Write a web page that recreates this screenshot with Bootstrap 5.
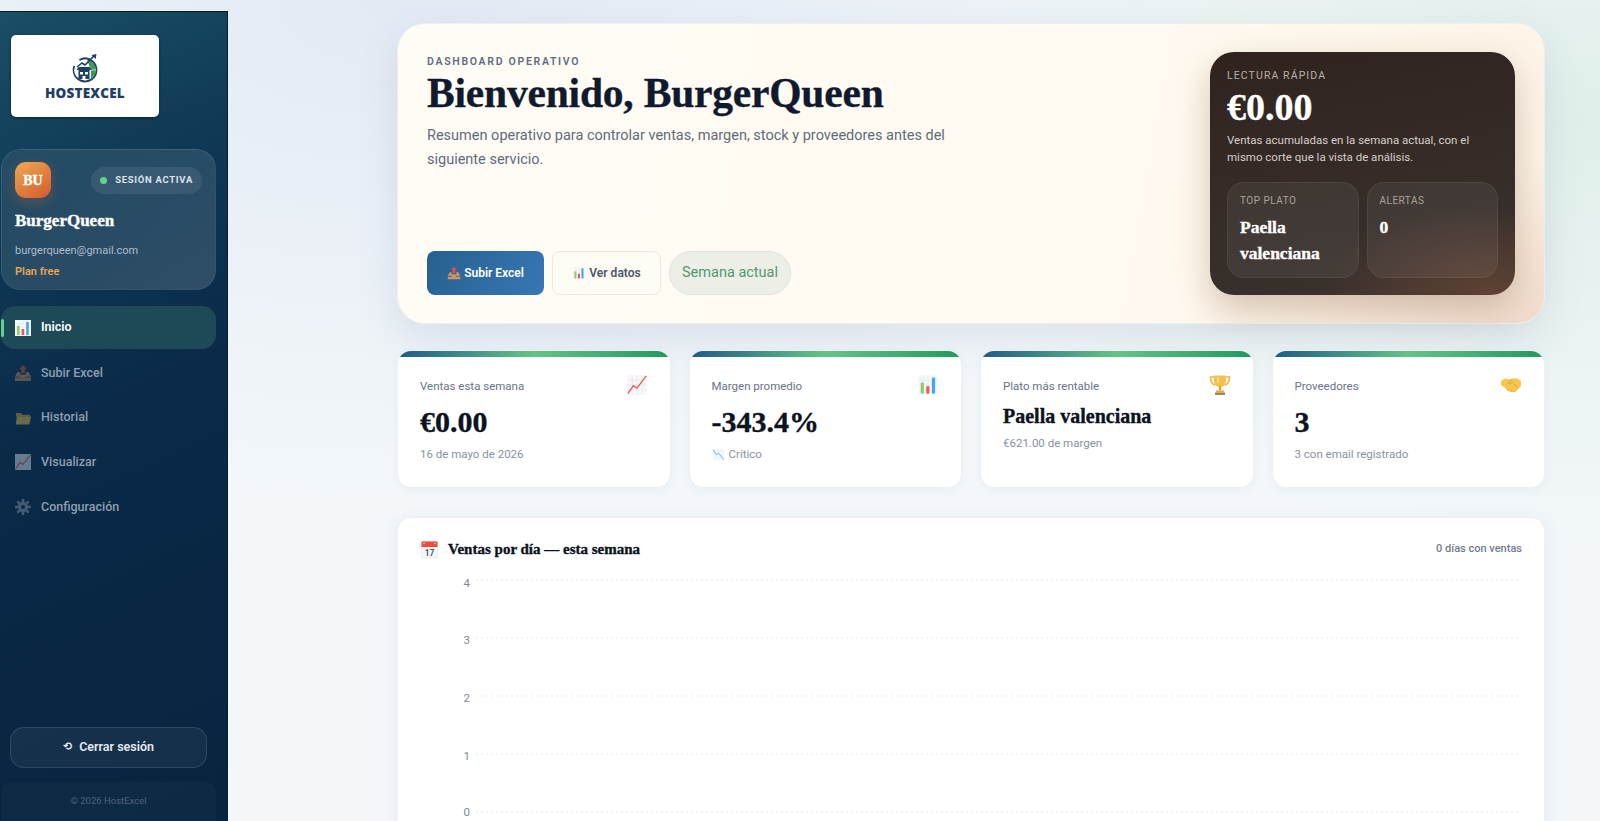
<!DOCTYPE html>
<html lang="es">
<head>
    <meta charset="utf-8" />
    <meta name="viewport" content="width=device-width, initial-scale=1">
    <title>HostExcel - Dashboard</title>
    <link href="https://cdn.jsdelivr.net/npm/bootstrap@5.3.0/dist/css/bootstrap.min.css" rel="stylesheet">
    <style>
        html, body { height: 821px; overflow: hidden; }
        body {
            font-family: Roboto, "Liberation Sans", sans-serif;
            background:
                radial-gradient(700px 420px at 100% 15%, #e0efea 0, rgba(224,239,234,0) 100%),
                radial-gradient(900px 500px at 25% 0, #e3eaf4 0, rgba(227,234,244,0) 100%),
                #f3f7fa;
            color: #0f172a;
        }
        .serif { font-family: "Liberation Serif", serif; font-weight: 700; -webkit-text-stroke: .35px currentColor; }
        .shell { height: 821px; }

        /* sidebar */
        .side {
            width: 228px; height: 810px; margin-top: 11px; flex: none;
            border-top: 1px solid #0b1c2c; border-right: 1px solid #0b1c2c;
            padding: 23px 11px 0 1px;
            background: linear-gradient(155deg, #1a4f66 0, #103a56 22%, #0a2a48 48%, #08243f 100%);
        }
        .logo-box { width: 148px; height: 82px; margin-left: 10px; border-radius: 5px; background: #fff; box-shadow: 0 1px 3px rgba(0,0,0,.5); }
        .logo-box svg { width: 27px; height: 30px; }
        .logo-word { font-family: "Open Sans", sans-serif; font-weight: 800; font-size: 13.5px; line-height: 13px; color: #1d3f63; letter-spacing: .2px; }
        .profile {
            margin-top: 32px; height: 141px; padding: 12px 13px;
            border: 1px solid rgba(255,255,255,.08); border-radius: 20px;
            background: linear-gradient(150deg, rgba(255,255,255,.07), rgba(255,255,255,.15));
        }
        .avatar { width: 36px; height: 36px; border-radius: 11px; font-size: 14px; color: #fff; background: linear-gradient(145deg, #eeaa50, #d4592f); box-shadow: 0 4px 14px rgba(212,110,50,.3); }
        .session { height: 27px; padding: 0 9px; border-radius: 14px; background: rgba(255,255,255,.08); font-size: 9.5px; font-weight: 700; letter-spacing: .7px; color: #dbe4ec; }
        .dot { width: 7px; height: 7px; border-radius: 50%; background: #5fd38d; }
        .pname { font-size: 17px; line-height: 20px; color: #fff; margin-top: 13px; }
        .pmail { font-size: 11px; color: #aebccb; margin-top: 13px; line-height: 14px; }
        .pplan { font-size: 11px; font-weight: 600; color: #e6a850; margin-top: 7px; line-height: 14px; }
        .side-nav { margin-top: 16px; }
        .side-nav .nav-link {
            height: 44.7px; padding: 0 0 0 13px; gap: 9px; border-radius: 14px;
            font-size: 12.5px; font-weight: 500; color: #8e9fb0; position: relative;
        }
        .side-nav .nav-link svg { width: 18px; height: 18px; opacity: .4; flex: none; }
        .side-nav .nav-link.active { height: 43px; margin-bottom: 1.7px; background: #1d4a56; color: #fff; font-weight: 600; }
        .side-nav .nav-link.active svg { opacity: 1; }
        .side-nav .nav-link.active::before { content: ""; position: absolute; left: 0; top: 13px; width: 3px; height: 18px; border-radius: 2px; background: #5fd38d; }
        .logout {
            margin-left: 9px; width: 197px; height: 41px; border-radius: 14px;
            border: 1px solid rgba(255,255,255,.12); background: rgba(255,255,255,.05);
            color: #e4eaf0; font-size: 12.5px; font-weight: 600; gap: 7px;
        }
        .logout:hover { color: #fff; border-color: rgba(255,255,255,.2); }
        .logout-g { font-family: "DejaVu Sans", sans-serif; font-size: 11px; }
        .side-foot { margin-top: 14px; height: 39px; border-radius: 10px 10px 0 0; background: rgba(255,255,255,.025); font-size: 9.5px; color: #4f6478; }

        /* main */
        .main-col { padding: 23px 55px 0 169px; min-width: 0; }
        .hero {
            height: 301px; padding: 28px 29px 28px 29px;
            border-radius: 28px; border: 1px solid #eef0ef;
            background:
                radial-gradient(360px 170px at 100% 100%, #f2dccd 0, rgba(242,220,205,0) 100%),
                linear-gradient(100deg, #fffcf5 0, #fffaf1 60%, #fdf4e7 100%);
            box-shadow: 0 14px 40px rgba(70,95,130,.13);
        }
        .eyebrow { font-size: 10.5px; font-weight: 600; letter-spacing: 1.7px; color: #5d6b80; line-height: 13px; margin-top: 3px; }
        .hero h1 { font-size: 41.5px; line-height: 46px; margin: 2px 0 0; color: #0f1a2e; letter-spacing: -.2px; }
        .hero-sub { width: 520px; font-size: 14.5px; line-height: 23.5px; color: #5e6b7d; margin-top: 8px; }
        .btn-up, .btn-see { height: 44px; padding: 0 19px; border-radius: 8px; font-size: 12px; font-weight: 600; gap: 3px; }
        .btn-up { width: 117px; padding: 0; color: #fff; border: 0; background: linear-gradient(120deg, #26608f, #3777b5); }
        .btn-up:hover { color: #fff; }
        .btn-see { width: 109px; padding: 0; color: #4b5666; border: 1px solid #efe9dc; background: #fffcf6; }
        .btn-up svg, .btn-see svg { width: 14px; height: 14px; }
        .range-pill { width: 122px; height: 44px; border-radius: 22px; background: #edeee6; border: 1px solid #dfe2d8; color: #4d9a70; font-size: 14.5px; }
        .quick {
            width: 305px; height: 243px; padding: 17px 17px 17px; border-radius: 24px; color: #fff;
            background:
                radial-gradient(170px 90px at 92% 100%, #5f4234 0, rgba(95,66,52,0) 100%),
                linear-gradient(170deg, #30231e 0, #362d29 60%, #3a322e 100%);
            box-shadow: 0 14px 36px rgba(120,80,50,.3);
        }
        .quick-lab { font-size: 10.5px; letter-spacing: 1.1px; color: #b9b0aa; line-height: 14px; }
        .quick-num { font-size: 38px; line-height: 40px; margin-top: 4px; }
        .quick-txt { font-size: 11.5px; line-height: 17px; color: #d5cfca; margin-top: 5px; }
        .tile { flex: 1 1 0; height: 96px; padding: 11px 12px; border-radius: 17px; border: 1px solid rgba(255,255,255,.06); background: rgba(255,255,255,.06); }
        .tile-lab { font-size: 10px; letter-spacing: .5px; color: #aaa29c; line-height: 14px; }
        .tile-val { font-size: 17.5px; line-height: 26px; margin-top: 6px; }

        .stat-row { --bs-gutter-x: 18px; --bs-gutter-y: 0; margin-top: 26px; }
        .stat {
            height: 138px; padding: 6px 22px 0; border: 1px solid #edf1f5; border-radius: 14px; position: relative; overflow: hidden;
            box-shadow: 0 2px 8px rgba(60,80,110,.05);
        }
        .stat::before { content: ""; position: absolute; left: 0; right: 0; top: 0; height: 6px; background: linear-gradient(90deg, #1f5a8a 0, #63c484 50%, #1f9a5f 100%); }
        .stat-lab { font-size: 11.5px; color: #67748a; margin-top: 22px; line-height: 14px; }
        .stat-ico { width: 22px; height: 22px; margin-top: 17px; }
        .stat-num { font-size: 30px; line-height: 36px; margin-top: 8px; color: #0b1220; }
        .stat-name { font-size: 20px; line-height: 26px; margin-top: 7px; color: #0b1220; }
        .stat-sub { font-size: 11.5px; color: #8792a4; margin-top: 6px; line-height: 16px; gap: 4px; }
        .stat-sub svg { width: 13px; height: 13px; }

        .chart-card { margin-top: 29px; height: 340px; padding: 20px 22px 0 22px; border: 1px solid #edf1f5; border-radius: 14px; box-shadow: 0 4px 18px rgba(60,80,110,.08); }
        .chart-title { font-size: 15px; gap: 9px; color: #0b1220; line-height: 22px; }
        .chart-title svg { width: 19px; height: 19px; }
        .chart-meta { font-size: 11px; font-weight: 500; color: #707c8e; }
        .chart-svg { display: block; margin-top: 10px; }
        .chart-svg text { font-family: Roboto, "Liberation Sans", sans-serif; font-size: 11.5px; fill: #7e899c; }
        .chart-svg line { stroke: #e6e9ee; stroke-dasharray: 2 3; }
    </style>
</head>
<body>
    <svg class="d-none" xmlns="http://www.w3.org/2000/svg">
        <symbol id="e-bars" viewBox="0 0 18 18">
            <rect x="1" y="1" width="16" height="16" fill="#f6f8fa"/>
            <path d="M1 5h16M1 9h16M1 13h16M5 1v16M9 1v16M13 1v16" stroke="#dfe6ee" stroke-width=".5"/>
            <rect x="3" y="7" width="2.6" height="9" fill="#8fce6b"/>
            <rect x="7.6" y="10" width="2.6" height="6" fill="#ef5a4c"/>
            <rect x="12.2" y="3" width="2.6" height="13" fill="#42a5f5"/>
        </symbol>
        <symbol id="e-out" viewBox="0 0 18 18">
            <path d="M9 1l4 4.2h-2.2V9H7.2V5.2H5z" fill="#e5503f"/>
            <path d="M3.5 8h2.6v2.5h5.8V8h2.6L17 12.5V17H1v-4.5z" fill="#c9956a"/>
            <path d="M1 12.5h5l1 1.8h4l1-1.8h5V14H1z" fill="#8d6344"/>
        </symbol>
        <symbol id="e-folder" viewBox="0 0 18 18">
            <path d="M2 4h5l1.5 1.8H16v2H2z" fill="#e0a93a"/>
            <path d="M3 7.4h14l-1.6 8H1.6z" fill="#f5c84c"/>
        </symbol>
        <symbol id="e-up" viewBox="0 0 18 18">
            <rect x="1" y="1" width="16" height="16" fill="#f6f8fa"/>
            <path d="M1 5h16M1 9h16M1 13h16M5 1v16M9 1v16M13 1v16" stroke="#dfe6ee" stroke-width=".5"/>
            <path d="M1.5 16L6 9.5l3 2L16.5 1.5" fill="none" stroke="#ef5a4c" stroke-width="1.1"/>
        </symbol>
        <symbol id="e-down" viewBox="0 0 18 18">
            <rect x="1" y="1" width="16" height="16" fill="#f6f8fa"/>
            <path d="M1 5h16M1 9h16M1 13h16M5 1v16M9 1v16M13 1v16" stroke="#dfe6ee" stroke-width=".5"/>
            <path d="M1.5 2L6 9l3-2 7.5 9.5" fill="none" stroke="#42a5f5" stroke-width="1.1"/>
        </symbol>
        <symbol id="e-gear" viewBox="0 0 18 18">
            <circle cx="9" cy="9" r="3.6" fill="none" stroke="#9aa7b5" stroke-width="3.2"/>
            <path d="M9 1v3M9 14v3M1 9h3M14 9h3M3.3 3.3l2.1 2.1M12.6 12.6l2.1 2.1M3.3 14.7l2.1-2.1M12.6 5.4l2.1-2.1" stroke="#9aa7b5" stroke-width="2.6"/>
        </symbol>
        <symbol id="e-cup" viewBox="0 0 22 22">
            <path d="M5 3H1.5c0 5 1.7 7.5 5 8M17 3h3.5c0 5-1.7 7.5-5 8" fill="none" stroke="#f4b43e" stroke-width="1.6"/>
            <path d="M5 1.5h12v5c0 4-2.5 6.5-6 6.5s-6-2.5-6-6.5z" fill="#f7c04a"/>
            <path d="M8 3h2v7c-1.4-.8-2-2.4-2-4z" fill="#fbdc8c"/>
            <rect x="9.8" y="12.5" width="2.4" height="4" fill="#e39f2f"/>
            <rect x="7" y="16.5" width="8" height="2" fill="#e8a93a"/>
            <rect x="6" y="18.5" width="10" height="2.5" fill="#a9825a"/>
        </symbol>
        <symbol id="e-shake" viewBox="0 0 22 22">
            <path d="M1 7l4-2.5 5 1 2-1 5-.2L21 7v5l-5 5.5c-1.2 1-2.4.7-3.2.4-1 .4-2 .2-2.8-.6-1 .1-1.8-.3-2.4-1.1C6.600 16 6 15.400 5.800 14.500L1 11z" fill="#f8c64f"/>
            <path d="M12 5.400L8.500 8.200c-.8 1 .3 2.200 1.500 1.500l2.400-1.300 5 5" fill="none" stroke="#e09f2e" stroke-width=".9"/>
            <path d="M7.600 16.700l1.500-1.500M10 17.800l1.800-1.800M12.800 18l1.600-1.600" stroke="#e09f2e" stroke-width=".9"/>
        </symbol>
        <symbol id="e-cal" viewBox="0 0 19 19">
            <rect x="1.500" y="1.500" width="16" height="16.500" rx="1" fill="#f4f6f8" stroke="#d8dde3" stroke-width=".5"/>
            <path d="M1.500 2.500a1 1 0 0 1 1-1h14a1 1 0 0 1 1 1V7h-16z" fill="#ef4a3d"/>
            <circle cx="4" cy="3.500" r=".7" fill="#fff"/><circle cx="15" cy="3.500" r=".7" fill="#fff"/>
            <text x="9.500" y="15.800" text-anchor="middle" font-family="Roboto, sans-serif" font-size="8.500" font-weight="500" fill="#37474f">17</text>
        </symbol>
    </svg>

    <div class="shell d-flex">
        <aside class="side d-flex flex-column">
            <div class="logo-box d-flex flex-column align-items-center justify-content-center">
                <svg viewBox="0 0 27 30" xmlns="http://www.w3.org/2000/svg">
                    <circle cx="13" cy="17" r="11.500" fill="none" stroke="#1d3f63" stroke-width="1.800" stroke-dasharray="50 8" transform="rotate(-50 13 17)"/>
                    <path d="M15 6.500a11 11 0 0 1 9 11c0 4-2 7-5 9v-9z" fill="#3f9a57"/>
                    <path d="M17 26v-9h7" fill="none" stroke="#d8ecd9" stroke-width=".8"/>
                    <path d="M5 14l5-4 3 2 9-9" fill="none" stroke="#1d3f63" stroke-width="1.600"/>
                    <path d="M19.500 2l5-1-.8 5z" fill="#1d3f63"/>
                    <path d="M4.500 17l2-3h11l2 3z" fill="#1d3f63"/>
                    <rect x="6.500" y="17" width="11" height="9" fill="#1d3f63"/>
                    <rect x="8" y="19" width="3" height="2.500" fill="#fff"/><rect x="13" y="19" width="3" height="2.500" fill="#fff"/>
                    <rect x="10.500" y="23" width="3" height="3" fill="#fff"/>
                </svg>
                <div class="logo-word mt-1">HOSTEXCEL</div>
            </div>

            <div class="profile">
                <div class="d-flex justify-content-between align-items-center">
                    <div class="avatar serif d-flex align-items-center justify-content-center">BU</div>
                    <div class="session d-flex align-items-center gap-2"><span class="dot"></span>SESIÓN ACTIVA</div>
                </div>
                <div class="pname serif">BurgerQueen</div>
                <div class="pmail">burgerqueen@gmail.com</div>
                <div class="pplan">Plan free</div>
            </div>

            <nav class="side-nav nav flex-column">
                <a class="nav-link active d-flex align-items-center" href="#"><svg><use href="#e-bars"/></svg>Inicio</a>
                <a class="nav-link d-flex align-items-center" href="#"><svg><use href="#e-out"/></svg>Subir Excel</a>
                <a class="nav-link d-flex align-items-center" href="#"><svg><use href="#e-folder"/></svg>Historial</a>
                <a class="nav-link d-flex align-items-center" href="#"><svg><use href="#e-up"/></svg>Visualizar</a>
                <a class="nav-link d-flex align-items-center" href="#"><svg><use href="#e-gear"/></svg>Configuración</a>
            </nav>

            <a href="#" class="logout btn d-flex align-items-center justify-content-center mt-auto"><span class="logout-g">⟲</span>Cerrar sesión</a>
            <div class="side-foot d-flex align-items-center justify-content-center">© 2026 HostExcel</div>
        </aside>

        <main class="main-col flex-grow-1">
            <section class="hero d-flex justify-content-between">
                <div class="d-flex flex-column justify-content-between">
                    <div>
                        <div class="eyebrow">DASHBOARD OPERATIVO</div>
                        <h1 class="serif">Bienvenido, BurgerQueen</h1>
                        <p class="hero-sub mb-0">Resumen operativo para controlar ventas, margen, stock y proveedores antes del siguiente servicio.</p>
                    </div>
                    <div class="d-flex gap-2 align-items-center">
                        <a href="#" class="btn btn-up d-flex align-items-center justify-content-center"><svg><use href="#e-out"/></svg>Subir Excel</a>
                        <a href="#" class="btn btn-see d-flex align-items-center justify-content-center"><svg><use href="#e-bars"/></svg>Ver datos</a>
                        <div class="range-pill d-flex align-items-center justify-content-center">Semana actual</div>
                    </div>
                </div>
                <div class="quick">
                    <div class="quick-lab">LECTURA RÁPIDA</div>
                    <div class="quick-num serif">€0.00</div>
                    <div class="quick-txt">Ventas acumuladas en la semana actual, con el mismo corte que la vista de análisis.</div>
                    <div class="d-flex gap-2 mt-3">
                        <div class="tile">
                            <div class="tile-lab">TOP PLATO</div>
                            <div class="tile-val serif">Paella valenciana</div>
                        </div>
                        <div class="tile">
                            <div class="tile-lab">ALERTAS</div>
                            <div class="tile-val serif">0</div>
                        </div>
                    </div>
                </div>
            </section>

            <div class="row row-cols-4 stat-row">
                <div class="col">
                    <div class="stat card">
                        <div class="d-flex justify-content-between">
                            <div class="stat-lab">Ventas esta semana</div>
                            <svg class="stat-ico"><use href="#e-up"/></svg>
                        </div>
                        <div class="stat-num serif">€0.00</div>
                        <div class="stat-sub">16 de mayo de 2026</div>
                    </div>
                </div>
                <div class="col">
                    <div class="stat card">
                        <div class="d-flex justify-content-between">
                            <div class="stat-lab">Margen promedio</div>
                            <svg class="stat-ico"><use href="#e-bars"/></svg>
                        </div>
                        <div class="stat-num serif">-343.4%</div>
                        <div class="stat-sub d-flex align-items-center"><svg><use href="#e-down"/></svg>Crítico</div>
                    </div>
                </div>
                <div class="col">
                    <div class="stat card">
                        <div class="d-flex justify-content-between">
                            <div class="stat-lab">Plato más rentable</div>
                            <svg class="stat-ico"><use href="#e-cup"/></svg>
                        </div>
                        <div class="stat-name serif">Paella valenciana</div>
                        <div class="stat-sub">€621.00 de margen</div>
                    </div>
                </div>
                <div class="col">
                    <div class="stat card">
                        <div class="d-flex justify-content-between">
                            <div class="stat-lab">Proveedores</div>
                            <svg class="stat-ico"><use href="#e-shake"/></svg>
                        </div>
                        <div class="stat-num serif">3</div>
                        <div class="stat-sub">3 con email registrado</div>
                    </div>
                </div>
            </div>

            <section class="chart-card card">
                <div class="d-flex justify-content-between align-items-center">
                    <div class="chart-title serif d-flex align-items-center"><svg><use href="#e-cal"/></svg>Ventas por día — esta semana</div>
                    <div class="chart-meta">0 días con ventas</div>
                </div>
                <svg class="chart-svg" width="1102" height="270" xmlns="http://www.w3.org/2000/svg">
                    <line x1="56" x2="1098" y1="10" y2="10"/>
                    <line x1="56" x2="1098" y1="68" y2="68"/>
                    <line x1="56" x2="1098" y1="126" y2="126"/>
                    <line x1="56" x2="1098" y1="184" y2="184"/>
                    <line x1="56" x2="1098" y1="242" y2="242"/>
                    <text x="50" y="17" text-anchor="end">4</text>
                    <text x="50" y="74" text-anchor="end">3</text>
                    <text x="50" y="132" text-anchor="end">2</text>
                    <text x="50" y="190" text-anchor="end">1</text>
                    <text x="50" y="246" text-anchor="end">0</text>
                    <text x="142" y="260" text-anchor="middle">Dom</text>
                    <text x="290" y="260" text-anchor="middle">Lun</text>
                    <text x="440" y="260" text-anchor="middle">Mar</text>
                    <text x="589" y="260" text-anchor="middle">Mié</text>
                    <text x="738" y="260" text-anchor="middle">Jue</text>
                    <text x="887" y="260" text-anchor="middle">Vie</text>
                    <text x="1036" y="260" text-anchor="middle">Sáb</text>
                </svg>
            </section>
        </main>
    </div>

    <script src="https://cdn.jsdelivr.net/npm/bootstrap@5.3.0/dist/js/bootstrap.bundle.min.js"></script>
</body>
</html>
